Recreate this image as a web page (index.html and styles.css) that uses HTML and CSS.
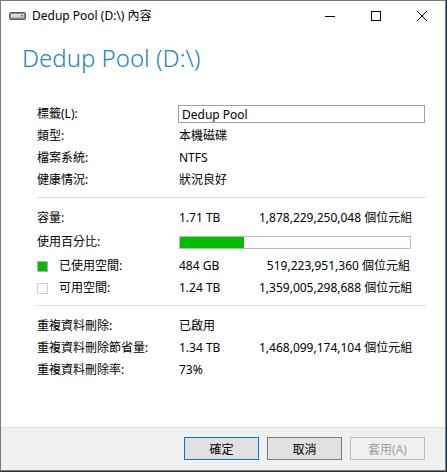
FILE: index.html
```html
<!DOCTYPE html>
<html lang="zh-Hant">
<head>
  <meta charset="UTF-8">
  <title>Dedup Pool (D:\) 內容</title>
  <link rel="stylesheet" href="styles.css">
</head>
<body>

<div class="window">
  <!-- 標題列 -->
  <div class="titlebar">
    <svg class="drive-icon" width="17" height="8" viewBox="0 0 17 8">
      <rect x="0.5" y="0.5" width="16" height="7" rx="1.5" fill="#8a8a8a" stroke="#5a5a5a"/>
      <rect x="2" y="2" width="13" height="3.5" fill="#d9d9d9"/>
      <rect x="12" y="3" width="2" height="1.5" fill="#6a6a6a"/>
    </svg>
    <span class="title-text">Dedup Pool (D:\) 內容</span>
    <div class="caption-buttons">
      <div class="cap-btn">
        <svg width="10" height="10" viewBox="0 0 10 10"><path d="M0 5.5H10" stroke="#000" stroke-width="1"/></svg>
      </div>
      <div class="cap-btn">
        <svg width="10" height="10" viewBox="0 0 10 10"><rect x="0.5" y="0.5" width="9" height="9" fill="none" stroke="#000"/></svg>
      </div>
      <div class="cap-btn">
        <svg width="10" height="10" viewBox="0 0 10 10"><path d="M0 0L10 10M10 0L0 10" stroke="#000" stroke-width="1"/></svg>
      </div>
    </div>
  </div>

  <div class="content">
    <h1 class="heading">Dedup Pool (D:\)</h1>

    <div class="section">
      <div class="row">
        <span>標籤(L):</span>
        <input class="textbox" type="text" value="Dedup Pool">
      </div>
      <div class="row"><span>類型:</span><span>本機磁碟</span></div>
      <div class="row"><span>檔案系統:</span><span>NTFS</span></div>
      <div class="row"><span>健康情況:</span><span>狀況良好</span></div>
    </div>

    <div class="sep"></div>

    <div class="section">
      <div class="row three"><span>容量:</span><span>1.71 TB</span><span class="bytes">1,878,229,250,048 個位元組</span></div>
      <div class="row bar-row">
        <span>使用百分比:</span>
        <div class="bar"><div class="bar-fill" style="width: 28%"></div></div>
      </div>
      <div class="row three">
        <span class="legend"><i class="swatch used"></i>已使用空間:</span>
        <span>484 GB</span>
        <span class="bytes">519,223,951,360 個位元組</span>
      </div>
      <div class="row three">
        <span class="legend"><i class="swatch"></i>可用空間:</span>
        <span>1.24 TB</span>
        <span class="bytes">1,359,005,298,688 個位元組</span>
      </div>
    </div>

    <div class="sep"></div>

    <div class="section">
      <div class="row"><span>重複資料刪除:</span><span>已啟用</span></div>
      <div class="row three"><span>重複資料刪除節省量:</span><span>1.34 TB</span><span class="bytes">1,468,099,174,104 個位元組</span></div>
      <div class="row"><span>重複資料刪除率:</span><span>73%</span></div>
    </div>
  </div>

  <!-- 按鈕列 -->
  <div class="footer">
    <button class="btn default">確定</button>
    <button class="btn">取消</button>
    <button class="btn" disabled>套用(A)</button>
  </div>
</div>

</body>
</html>
```

FILE: styles.css
```css
body {
  margin: 0;
  background: #1b3447;
  font-family: "Segoe UI", "Noto Sans", "Noto Sans CJK TC", sans-serif;
  font-size: 12px;
  color: #000;
}
.window {
  width: 444px;
  height: 469px;
  border: 1px solid #7a7a7a;
  background: #fff;
  display: flex;
  flex-direction: column;
}
.titlebar {
  height: 30px;
  display: flex;
  align-items: center;
}
.drive-icon { margin-left: 8px; margin-right: 6px; }
.title-text { line-height: 16px; flex: 1; }
.caption-buttons { display: flex; align-self: stretch; }
.cap-btn {
  width: 46px;
  display: flex;
  align-items: center;
  justify-content: center;
}
.content {
  flex: 1;
  padding: 0 19px 0 36px;
}
.heading {
  margin: 12px 0 30px -15px;
  font-size: 24px;
  font-weight: 300;
  line-height: 30px;
  color: #2283bd;
}
.section { display: flex; flex-direction: column; }
.row {
  display: grid;
  grid-template-columns: 142px 80px 151px;
  height: 22px;
  align-items: center;
  line-height: 16px;
  white-space: nowrap;
}
.row .textbox { grid-column: 2 / 4; }
.bytes { text-align: right; }
.textbox {
  width: 247px;
  height: 18px;
  box-sizing: border-box;
  margin-left: -1px;
  padding: 0 3px;
  border: 1px solid #a0a0a0;
  font: inherit;
  font-size: 12px;
}
.bar-row { height: 26px; }
.bar {
  grid-column: 2 / 4;
  height: 13px;
  box-sizing: border-box;
  border: 1px solid #bcbcbc;
  background: #fcfcfc;
  margin-right: -1px;
}
.bar-fill { height: 100%; background: #00bd00; }
.legend { display: flex; align-items: center; }
.swatch {
  width: 11px;
  height: 11px;
  box-sizing: border-box;
  border: 1px solid #cfcfcf;
  background: #fff;
  margin-right: 11px;
}
.swatch.used { background: #00bd00; border-color: #b0b0b0; }
.sep {
  height: 1px;
  background: #d9d9d9;
  margin: 6px 0 9px;
}
.footer {
  height: 43px;
  border-top: 1px solid #dfdfdf;
  background: #f0f0f0;
  display: flex;
  justify-content: flex-end;
  align-items: flex-start;
  gap: 8px;
  padding: 9px 20px 0 0;
  box-sizing: border-box;
}
.btn {
  width: 75px;
  height: 23px;
  border: 1px solid #7a7a7a;
  background: #e1e1e1;
  font: inherit;
  font-size: 12px;
  color: #000;
  padding: 0;
}
.btn.default { border-color: #0078d7; }
.btn:disabled { border-color: #bfbfbf; background: #f0f0f0; color: #a0a0a0; }
```
